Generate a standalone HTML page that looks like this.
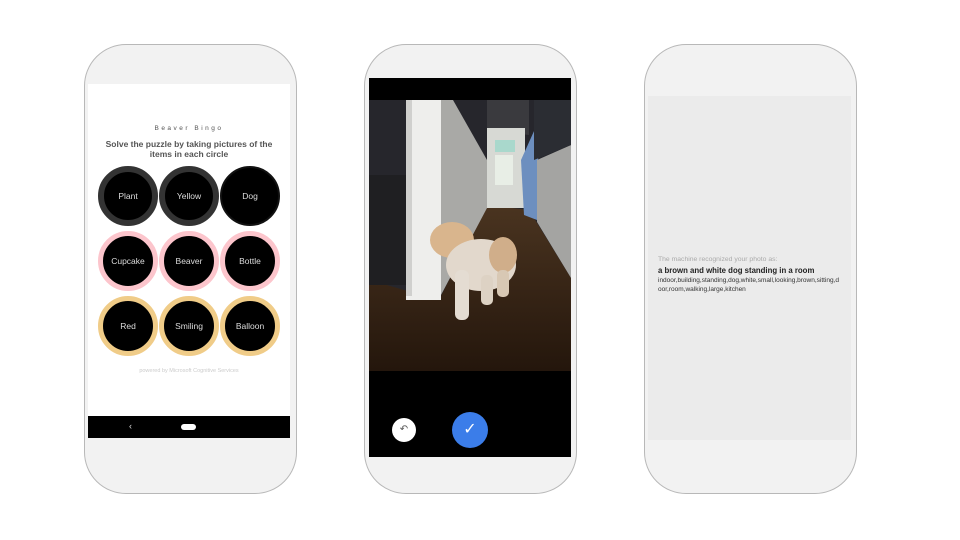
<!DOCTYPE html>
<html><head><style>
body{margin:0;width:960px;height:540px;background:#fff;position:relative;overflow:hidden;font-family:"Liberation Sans",sans-serif}
.ph{position:absolute;top:44px;width:213px;height:450px;border:1px solid #b8b8b8;border-radius:42px;background:#f2f2f2;box-sizing:border-box}
.abs{position:absolute}
.c{position:absolute;width:60px;height:60px;border-radius:50%;box-sizing:border-box;background:#000;display:flex;align-items:center;justify-content:center;color:#ddd;font-size:8.5px}
</style></head><body>
<div class="ph" style="left:84px"></div>
<div class="ph" style="left:364px"></div>
<div class="ph" style="left:644px"></div>

<div class="abs" style="left:88px;top:84px;width:202px;height:332px;background:#fff"></div>
<div class="abs" style="left:88px;top:416px;width:202px;height:22px;background:#000"></div>
<div class="abs" style="left:129px;top:421px;color:#ddd;font-size:9px">‹</div>
<div class="abs" style="left:181px;top:424px;width:15px;height:6px;border-radius:3px;background:#fff"></div>
<div class="abs" style="left:88px;top:125px;width:202px;text-align:center;font-size:6.5px;letter-spacing:2.5px;color:#555">Beaver Bingo</div>
<div class="abs" style="left:88px;top:139px;width:202px;text-align:center;font-size:8.5px;line-height:10px;color:#555;font-weight:bold">Solve the puzzle by taking pictures of the<br>items in each circle</div>
<div class="c" style="left:98px;top:166px;border:6px solid #333">Plant</div>
<div class="c" style="left:159px;top:166px;border:6px solid #333">Yellow</div>
<div class="c" style="left:220px;top:166px;border:2px solid #111">Dog</div>
<div class="c" style="left:98px;top:231px;border:5px solid #fcc5cc">Cupcake</div>
<div class="c" style="left:159px;top:231px;border:5px solid #fcc5cc">Beaver</div>
<div class="c" style="left:220px;top:231px;border:5px solid #fcc5cc">Bottle</div>
<div class="c" style="left:98px;top:296px;border:5px solid #f0cc88">Red</div>
<div class="c" style="left:159px;top:296px;border:5px solid #f0cc88">Smiling</div>
<div class="c" style="left:220px;top:296px;border:5px solid #f0cc88">Balloon</div>
<div class="abs" style="left:88px;top:368px;width:202px;text-align:center;font-size:5.5px;color:#ccc">powered by Microsoft Cognitive Services</div>

<div class="abs" style="left:369px;top:78px;width:202px;height:379px;background:#000"></div>
<svg class="abs" style="left:369px;top:100px" width="202" height="271" viewBox="0 0 202 271">
<defs><linearGradient id="fl" x1="0" y1="0" x2="0" y2="1"><stop offset="0" stop-color="#4a3420"/><stop offset="1" stop-color="#24160c"/></linearGradient></defs>
<rect width="202" height="271" fill="#26262c"/>
<polygon points="0,180 70,200 118,105 160,110 202,178 202,271 0,271" fill="url(#fl)"/>
<rect x="0" y="75" width="37" height="110" fill="#1f1f22"/>
<polygon points="72,0 84,0 118,60 118,108 72,195" fill="#a9a9a6"/>
<polygon points="118,0 160,0 160,35 118,30" fill="#3a3a3e"/>
<rect x="118" y="28" width="38" height="80" fill="#d7d9d4"/>
<rect x="126" y="40" width="20" height="12" fill="#a9d8cc"/>
<rect x="126" y="55" width="18" height="30" fill="#e8eee6"/>
<polygon points="152,60 170,20 168,120 155,115" fill="#6d8fbf"/>
<polygon points="168,60 202,45 202,178 168,122" fill="#a4a4a2"/>
<polygon points="165,0 202,0 202,45 165,60" fill="#2b2d33"/>
<rect x="37" y="0" width="35" height="200" fill="#eeeeec"/>
<rect x="37" y="0" width="6" height="196" fill="#d0d0ce"/>
<ellipse cx="83" cy="140" rx="22" ry="18" fill="#d9b58d"/>
<ellipse cx="112" cy="165" rx="35" ry="26" fill="#e2d8cc"/>
<ellipse cx="134" cy="155" rx="14" ry="18" fill="#d0ae8a"/>
<rect x="86" y="170" width="14" height="50" rx="6" fill="#e4dcd2"/>
<rect x="112" y="175" width="12" height="30" rx="5" fill="#ddd2c4"/>
<rect x="128" y="170" width="12" height="27" rx="5" fill="#d8c8b4"/>
</svg>
<div class="abs" style="left:392px;top:418px;width:24px;height:24px;border-radius:50%;background:#fff;color:#555;font-size:10px;text-align:center;line-height:24px">↶</div>
<div class="abs" style="left:452px;top:412px;width:36px;height:36px;border-radius:50%;background:#3b7de9;color:#fff;font-size:16px;text-align:center;line-height:36px">✓</div>

<div class="abs" style="left:648px;top:96px;width:203px;height:344px;background:#ebebeb"></div>
<div class="abs" style="left:658px;top:256px;font-size:6.8px;color:#aaa">The machine recognized your photo as:</div>
<div class="abs" style="left:658px;top:266px;font-size:7.8px;color:#222;font-weight:bold">a brown and white dog standing in a room</div>
<div class="abs" style="left:658px;top:277px;width:184px;font-size:6.5px;line-height:8.5px;color:#333;word-break:break-all">indoor,building,standing,dog,white,small,looking,brown,sitting,door,room,walking,large,kitchen</div>
</body></html>
